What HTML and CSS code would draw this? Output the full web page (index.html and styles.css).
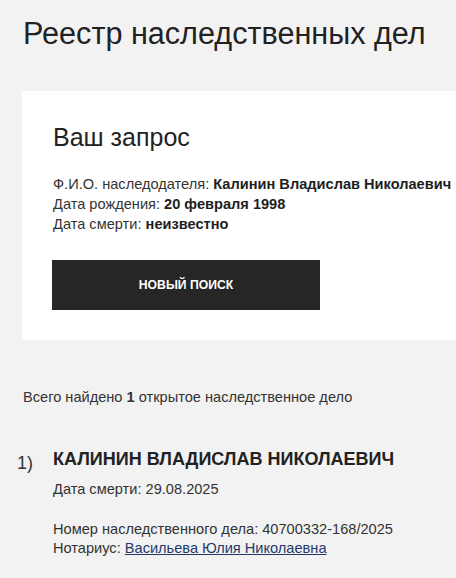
FILE: index.html
```html
<!DOCTYPE html>
<html lang="ru">
<head>
<meta charset="utf-8">
<title>Реестр наследственных дел</title>
<link rel="stylesheet" href="styles.css">
</head>
<body>
<div class="page">
  <h1 class="title">Реестр наследственных дел</h1>
  <section class="card">
    <h2 class="card-title">Ваш запрос</h2>
    <div class="query">
      <div>Ф.И.О. наследодателя: <b>Калинин Владислав Николаевич</b></div>
      <div>Дата рождения: <b>20 февраля 1998</b></div>
      <div>Дата смерти: <b>неизвестно</b></div>
    </div>
    <button class="btn" type="button">НОВЫЙ ПОИСК</button>
  </section>
  <p class="total">Всего найдено <b>1</b> открытое наследственное дело</p>
  <ol class="results">
    <li class="result">
      <span class="num">1)</span>
      <div class="result-body">
        <div class="name">КАЛИНИН ВЛАДИСЛАВ НИКОЛАЕВИЧ</div>
        <div class="death">Дата смерти: 29.08.2025</div>
        <div class="details">
          <div>Номер наследственного дела: 40700332-168/2025</div>
          <div>Нотариус: <a class="link" href="#">Васильева Юлия Николаевна</a></div>
        </div>
      </div>
    </li>
  </ol>
</div>
</body>
</html>
```
FILE: styles.css
```css
html, body {
  margin: 0;
  padding: 0;
}
body {
  background: #f2f2f2;
  color: #222222;
  font-family: "Liberation Sans", Arial, sans-serif;
  font-size: 14.6px;
  line-height: 20px;
}
.page {
  padding: 16px 0 0 23px;
  overflow: hidden;
  white-space: nowrap;
}
.title {
  margin: 0;
  font-size: 30.6px;
  line-height: 34px;
  font-weight: normal;
  color: #222222;
}
.card {
  margin: 41px 0 0 -1px;
  background: #ffffff;
  padding: 32px 0 30px 31px;
}
.card-title {
  margin: 0;
  font-size: 25px;
  line-height: 28px;
  font-weight: normal;
  color: #222222;
}
.query {
  margin-top: 23px;
  color: #333333;
}
.query b {
  color: #1e1e1e;
}
.btn {
  display: flex;
  align-items: center;
  justify-content: center;
  margin: 26px 0 0 -1px;
  width: 268px;
  height: 50px;
  border: 0;
  background: #262626;
  color: #ffffff;
  font-family: "Liberation Sans", Arial, sans-serif;
  font-weight: bold;
  font-size: 12.2px;
  padding: 0;
}
.total {
  margin: 47px 0 0 0;
  color: #333333;
}
.results {
  list-style: none;
  margin: 41px 0 0 0;
  padding: 0;
}
.result {
  display: flex;
  margin-left: -6px;
}
.num {
  flex: none;
  width: 36px;
  font-size: 18px;
  line-height: 22px;
  padding-top: 4px;
  color: #333333;
}
.name {
  font-size: 18px;
  line-height: 22px;
  font-weight: bold;
  color: #222222;
}
.death {
  margin-top: 9px;
  color: #333333;
}
.details {
  margin-top: 21px;
  line-height: 19px;
  color: #333333;
}
.link {
  color: #243a6b;
  text-decoration: underline;
}
```
